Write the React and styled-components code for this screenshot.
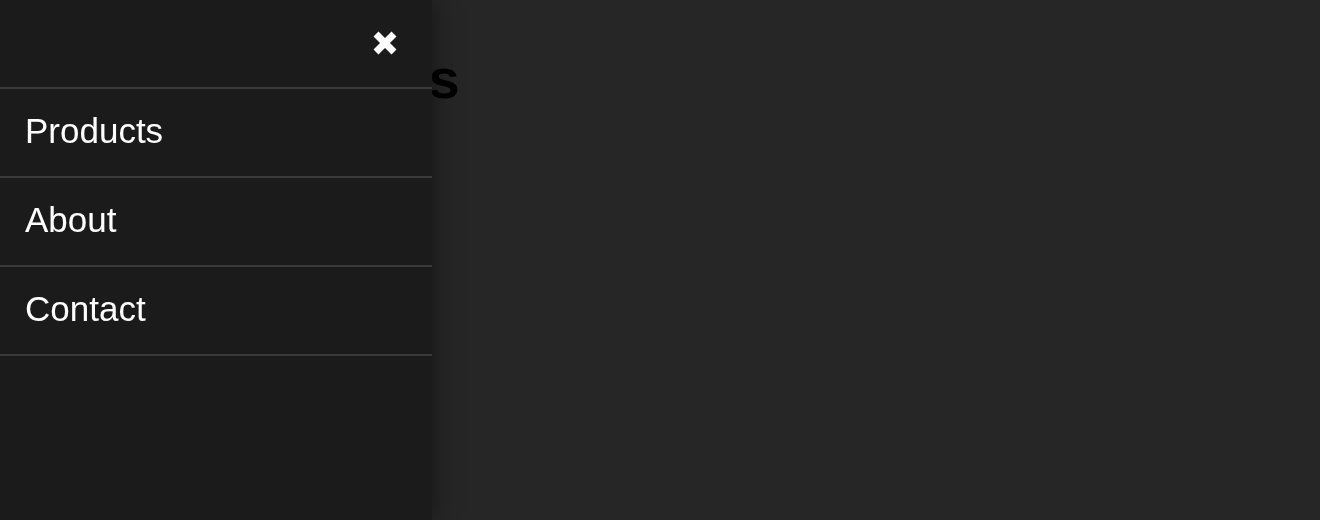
import styled, { createGlobalStyle } from "styled-components";

const GlobalStyle = createGlobalStyle`
  html, body {
    margin: 0;
    padding: 0;
    background: #262626;
    font-family: "Liberation Sans", Arial, sans-serif;
  }
`;

const links = ["Products", "About", "Contact"];

export default function App() {
  return (
    <>
      <GlobalStyle />
      <Page>
        <Title>Products</Title>
      </Page>
      <Drawer aria-label="Main menu">
        <DrawerHeader>
          <CloseButton type="button" aria-label="Close menu">
            <svg width="26" height="26" viewBox="0 0 26 26" aria-hidden="true">
              <path
                d="M4 4 L22 22 M22 4 L4 22"
                stroke="#fff"
                strokeWidth="7"
                strokeLinecap="butt"
              />
            </svg>
          </CloseButton>
        </DrawerHeader>
        <NavList>
          {links.map((label) => (
            <NavItem key={label}>
              <NavLink href="#">{label}</NavLink>
            </NavItem>
          ))}
        </NavList>
      </Drawer>
    </>
  );
}

const Page = styled.main`
  min-height: 100vh;
  background: #262626;
  padding: 47px 0 0 217px;
  box-sizing: border-box;
`;

const Title = styled.h1`
  margin: 0;
  font-size: 56px;
  line-height: 64px;
  font-weight: 700;
  color: #000;
`;

const Drawer = styled.nav`
  position: fixed;
  top: 0;
  left: 0;
  bottom: 0;
  width: 432px;
  background: #1b1b1b;
  box-shadow: 4px 0 24px rgba(0, 0, 0, 0.35);
`;

const DrawerHeader = styled.div`
  height: 87px;
  display: flex;
  align-items: center;
  justify-content: flex-end;
  padding-right: 34px;
  border-bottom: 2px solid #3a3a3a;
`;

const CloseButton = styled.button`
  display: flex;
  padding: 0;
  border: 0;
  background: none;
  cursor: pointer;
  margin-top: -2px;
`;

const NavList = styled.ul`
  list-style: none;
  margin: 0;
  padding: 0;
`;

const NavItem = styled.li`
  border-bottom: 2px solid #3a3a3a;
`;

const NavLink = styled.a`
  display: block;
  height: 87px;
  box-sizing: border-box;
  padding: 22px 25px 25px;
  font-size: 35px;
  line-height: 40px;
  color: #fff;
  text-decoration: none;
`;
